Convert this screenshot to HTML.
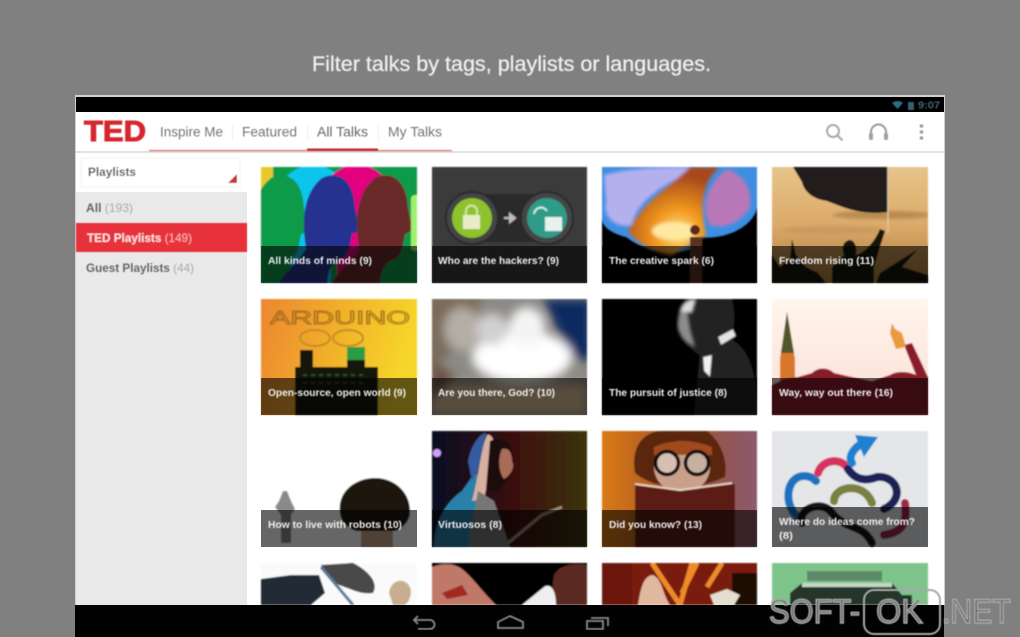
<!DOCTYPE html>
<html><head><meta charset="utf-8"><title>TED</title>
<style>html,body{margin:0;padding:0;background:#808080;width:1020px;height:637px;overflow:hidden}svg{display:block}text{font-family:"Liberation Sans",sans-serif}</style></head>
<body>
<svg width="1020" height="637" viewBox="0 0 1020 637" xmlns="http://www.w3.org/2000/svg">
<defs>
<filter id="b" x="-5%" y="-5%" width="110%" height="110%"><feGaussianBlur stdDeviation="0.55"/></filter>
<filter id="a" x="-3%" y="-3%" width="106%" height="106%"><feGaussianBlur stdDeviation="0.9"/></filter>
<filter id="b2" x="-10%" y="-10%" width="120%" height="120%"><feGaussianBlur stdDeviation="1.600"/></filter>
<filter id="b4" x="-40%" y="-40%" width="180%" height="180%"><feGaussianBlur stdDeviation="5"/></filter>
<linearGradient id="ard" x1="0" y1="0" x2="1" y2="0.2"><stop offset="0" stop-color="#ec8630"/><stop offset=".6" stop-color="#f2b72a"/><stop offset="1" stop-color="#f6d62c"/></linearGradient>
<linearGradient id="sand" x1="0" y1="0" x2="0" y2="1"><stop offset="0" stop-color="#e6c48a"/><stop offset=".5" stop-color="#dca968"/><stop offset="1" stop-color="#a87a3a"/></linearGradient>
<linearGradient id="pink" x1="0" y1="0" x2="0" y2="1"><stop offset="0" stop-color="#fff6ea"/><stop offset="1" stop-color="#fbdcd8"/></linearGradient>
<linearGradient id="virt" x1="0" y1="0" x2="1" y2="0"><stop offset="0" stop-color="#0a0a24"/><stop offset=".55" stop-color="#3c100c"/><stop offset="1" stop-color="#3a3406"/></linearGradient>
<linearGradient id="book" x1="0" y1="0" x2="1" y2="0"><stop offset="0" stop-color="#d97a14"/><stop offset=".5" stop-color="#a0502c"/><stop offset="1" stop-color="#8a5a70"/></linearGradient>
<radialGradient id="fire" cx=".55" cy=".75" r=".65"><stop offset="0" stop-color="#ffe88a"/><stop offset=".4" stop-color="#f29a20"/><stop offset="1" stop-color="#a84a1a"/></radialGradient>
<path id="head" d="M-57 116C-50 100-35 90-26 75C-30 50-30 20-10 4C5-3 18 4 22 25C23 35 24 40 27 52Q28 58 20 60C18 70 18 80 10 85C0 88-5 95-5 116Z"/>
</defs>
<rect width="1020" height="637" fill="#808080"/>
<text x="312" y="71" font-size="21" fill="#f0f0f0" stroke="#f0f0f0" stroke-width=".25" textLength="399" lengthAdjust="spacingAndGlyphs" filter="url(#b)">Filter talks by tags, playlists or languages.</text>

<!-- device -->
<rect x="75" y="95" width="870" height="510" fill="#d0d0d0"/>
<rect x="76" y="97" width="868" height="15" fill="#000"/>
<rect x="76" y="112" width="868" height="525" fill="#fff"/>
<rect x="76" y="151" width="868" height="2" fill="#e2e2e2"/>

<g filter="url(#b)">
<path d="M892 103q6-4 11 0l-5.500 6z" fill="#2a6f80"/>
<rect x="908" y="102" width="6" height="8" fill="#3a5d70"/>
<text x="918" y="108.500" font-size="10" font-weight="bold" fill="#4a6570" textLength="22" lengthAdjust="spacingAndGlyphs">9:07</text>
<text x="84" y="141" font-size="29" font-weight="bold" fill="#d6282e" stroke="#d6282e" stroke-width="1" textLength="62" lengthAdjust="spacingAndGlyphs">TED</text>
<g font-size="13.500" fill="#757575">
<text x="160" y="136.500" textLength="63" lengthAdjust="spacingAndGlyphs">Inspire Me</text>
<text x="242" y="136.500" textLength="55" lengthAdjust="spacingAndGlyphs">Featured</text>
<text x="317" y="136.500" textLength="51" lengthAdjust="spacingAndGlyphs" fill="#666">All Talks</text>
<text x="388" y="136.500" textLength="54" lengthAdjust="spacingAndGlyphs">My Talks</text>
</g>
<rect x="149" y="150" width="303" height="1.200" fill="#d96a6a"/>
<rect x="307" y="148.500" width="71" height="2.500" fill="#bb2a30"/>
<path d="M232.500 125v16M307.500 125v16M378.500 125v16" stroke="#eee"/>
<circle cx="833" cy="131" r="6" fill="none" stroke="#aaa" stroke-width="2"/>
<path d="M837.500 135.500l5 5" stroke="#aaa" stroke-width="2.200"/>
<path d="M871 135v-3a7.500 7.500 0 0 1 15 0v3" fill="none" stroke="#999" stroke-width="2"/>
<rect x="869" y="133" width="4" height="7" rx="1.500" fill="#a0a0a0"/><rect x="884" y="133" width="4" height="7" rx="1.500" fill="#a0a0a0"/>
<circle cx="921.500" cy="126" r="1.800" fill="#999"/><circle cx="921.500" cy="132" r="1.800" fill="#999"/><circle cx="921.500" cy="138" r="1.800" fill="#999"/>
</g>

<!-- sidebar -->
<rect x="76" y="192" width="171" height="413" fill="#e9e9e9"/>
<g filter="url(#b)">
<rect x="81" y="158" width="159" height="29" fill="#fff" stroke="#f2f2f2"/>
<path d="M237 174v9h-9z" fill="#c8303a"/>
<text x="88" y="176" font-size="12" font-weight="bold" fill="#555" textLength="48" lengthAdjust="spacingAndGlyphs">Playlists</text>
<text x="86" y="212" font-size="12" textLength="47" lengthAdjust="spacingAndGlyphs" fill="#aaa"><tspan font-weight="bold" fill="#666">All</tspan> (193)</text>
<rect x="76" y="223" width="171" height="29" fill="#e8303a"/>
<text x="87" y="242" font-size="12" textLength="105" lengthAdjust="spacingAndGlyphs" fill="#f5b5b5"><tspan font-weight="bold" fill="#fbe4e4">TED Playlists</tspan> (149)</text>
<text x="86" y="272" font-size="12" textLength="108" lengthAdjust="spacingAndGlyphs" fill="#aaa"><tspan font-weight="bold" fill="#666">Guest Playlists</tspan> (44)</text>
</g>

<!-- row 1 -->
<g filter="url(#a)">
<svg x="261" y="167" width="156" height="116" viewBox="0 0 156 116">
<rect width="156" height="116" fill="#0f9a4a"/>
<rect width="12" height="30" fill="#e8c82a"/><rect y="80" width="10" height="36" fill="#e8c82a"/>
<circle cx="52" cy="34" r="36" fill="#0cc4ec"/><rect x="30" y="40" width="40" height="76" fill="#0cc4ec"/>
<circle cx="96" cy="34" r="36" fill="#e2047e"/><rect x="76" y="40" width="38" height="76" fill="#e2047e"/>
<use href="#head" x="20" y="7" fill="#0f9a4a"/>
<use href="#head" x="71" y="7" fill="#26308f"/>
<use href="#head" x="124" y="7" fill="#6b2c2a"/>
<rect x="150" y="28" width="8" height="56" rx="4" fill="#a0f070"/>
</svg>
<svg x="432" y="167" width="155" height="116" viewBox="0 0 155 116">
<rect width="155" height="116" fill="#3a3a3a"/>
<rect x="38" y="27" width="80" height="48" fill="#2c2c2c"/>
<circle cx="40" cy="51" r="26" fill="#444" stroke="#2a2a2a" stroke-width="2"/>
<circle cx="115" cy="51" r="26" fill="#444" stroke="#2a2a2a" stroke-width="2"/>
<circle cx="40" cy="51" r="20" fill="#8ec32e"/>
<circle cx="115" cy="51" r="20" fill="#2f9c88"/>
<rect x="31" y="48" width="17" height="14" fill="#e8edc8"/>
<path d="M34 48v-4a5.500 5.500 0 0 1 11 0v4" fill="none" stroke="#d6e6a0" stroke-width="2"/>
<rect x="113" y="50" width="17" height="14" fill="#e6f2ee"/>
<path d="M102 47a7 7 0 0 1 13-3" fill="none" stroke="#d0eee6" stroke-width="2"/>
<path d="M72 51h10M78 47l5 4-5 4z" stroke="#bbb" stroke-width="2" fill="#bbb"/>
</svg>
<svg x="602" y="167" width="155" height="116" viewBox="0 0 155 116">
<rect width="155" height="116" fill="#040404"/>
<path d="M0 0H155V40C150 62 120 72 100 70C95 90 50 90 25 70C10 66 0 60 0 50Z" fill="#3d8ee2"/>
<g filter="url(#b2)">
<path d="M2 8C30 0 70 0 95 0 70 15 35 30 30 58 15 62 0 50 4 35Z" fill="#b4b0ee"/>
<path d="M88 0H118C100 14 98 40 104 68L70 88C50 85 35 76 26 64 40 35 70 18 88 0Z" fill="url(#fire)"/>
<path d="M125 2C142 8 150 22 148 40 138 58 118 62 108 58 98 40 106 16 125 2Z" fill="#b878b8"/>
<ellipse cx="72" cy="64" rx="22" ry="9" fill="#ffe9a0"/>
</g>
<circle cx="93" cy="63" r="5" fill="#5a2a12"/>
<rect x="88" y="70" width="12" height="46" fill="#5a3020"/>
</svg>
<svg x="772" y="167" width="156" height="116" viewBox="0 0 156 116">
<rect width="156" height="116" fill="url(#sand)"/>
<g filter="url(#b2)"><ellipse cx="110" cy="48" rx="50" ry="4" fill="#b88a50"/><ellipse cx="60" cy="63" rx="50" ry="4" fill="#c89a60"/></g>
<path d="M21 0H116V45C90 48 75 42 55 34C40 32 32 24 30 15Z" fill="#201d1a"/>
<path d="M116 0v66" stroke="#d8c8a0" stroke-width="1.500"/>
<path d="M0 116V88L8 100 18 92 20 72 24 88 34 100 46 106 54 116ZM60 116V100L72 88C68 78 74 73 78 73 84 74 85 82 84 88 92 86 102 76 108 62L113 64 108 80 102 100 102 116ZM104 116L108 106 146 82 130 100 156 108V116Z" fill="#141210"/>
</svg>
<!-- row 2 -->
<svg x="261" y="299" width="156" height="116" viewBox="0 0 156 116">
<rect width="156" height="116" fill="url(#ard)"/>
<text x="9" y="25" font-size="18" fill="none" stroke="#9a6418" stroke-width=".9" textLength="140" lengthAdjust="spacingAndGlyphs">ARDUINO</text>
<ellipse cx="54" cy="39" rx="15" ry="8" fill="none" stroke="#c48c20" stroke-width="2"/><ellipse cx="87" cy="39" rx="15" ry="8" fill="none" stroke="#c48c20" stroke-width="2"/>
<path d="M34 116V68H39V51H52V68H86V50H104V68H117V116Z" fill="#14160c"/>
<rect x="86" y="48" width="18" height="13" fill="#2c9c44"/>
<path d="M42 76h60M42 84h60" stroke="#2c5a30" stroke-width="1.500" stroke-dasharray="4 4"/>
</svg>
<svg x="432" y="299" width="155" height="116" viewBox="0 0 155 116">
<rect width="155" height="116" fill="#8c8a86"/>
<g filter="url(#b4)">
<path d="M110 0H160V60H135C130 40 120 20 110 0Z" fill="#0e2a60"/>
<path d="M-5-5H50L40 40-5 70Z" fill="#7a6a5a"/>
<ellipse cx="30" cy="30" rx="18" ry="22" fill="#b4aea4"/>
<ellipse cx="90" cy="58" rx="50" ry="26" fill="#fff"/>
<ellipse cx="95" cy="28" rx="18" ry="20" fill="#f4f4f4"/>
<ellipse cx="60" cy="30" rx="16" ry="16" fill="#d0d0d0"/>
<path d="M0 85H155V116H0Z" fill="#dcc09a"/>
<path d="M0 60L25 80 0 100Z" fill="#6a5040"/>
</g>
</svg>
<svg x="602" y="299" width="155" height="116" viewBox="0 0 155 116">
<rect width="155" height="116" fill="#040404"/>
<path d="M84 0H130C134 20 132 30 128 40 150 50 155 80 155 116H92L98 56C88 50 78 40 76 28 76 12 80 8 84 0Z" fill="#222"/>
<g filter="url(#b2)">
<path d="M76 28C76 14 80 6 84 4L88 30 93 48C84 44 78 38 76 28Z" fill="#8c8c8c"/>
<path d="M78 12C80 4 86 0 94 0L90 14Z" fill="#dcdcdc"/>
</g>
<path d="M116 38l15-8 3 7-15 9z" fill="#e4e4e4" filter="url(#b)"/><path d="M101 58l9-2-2 22-6-6z" fill="#f0f0f0" filter="url(#b)"/>
</svg>
<svg x="772" y="299" width="156" height="116" viewBox="0 0 156 116">
<rect width="156" height="116" fill="url(#pink)"/>
<path d="M8 116V60L15 13 23 60V116Z" fill="#d8762a"/><path d="M9 54L15 13 22 54Z" fill="#50562a"/>
<path d="M0 116V86L12 80 26 78 40 74C46 68 56 68 62 74L80 78 100 82 118 76C124 72 136 72 144 76L132 46 140 44 156 78V116Z" fill="#8a1e2c"/>
<path d="M118 34L120 24 123 30 130 34 134 48 124 50Z" fill="#ec9a40"/>
</svg>
<!-- row 3 -->
<svg x="261" y="431" width="156" height="116" viewBox="0 0 156 116">
<rect width="156" height="116" fill="#fff"/>
<path d="M100 95H132V116H100Z" fill="#c8a48a"/>
<path d="M79 82C76 60 95 47 114 47 134 47 150 62 149 82 148 92 140 98 134 100H96C88 98 80 92 79 82Z" fill="#1a1410"/>
<path d="M20 112V84L14 76 18 70 22 60 26 60 30 70 34 78 30 84 30 112Z" fill="#8a8a8a"/>
</svg>
<svg x="432" y="431" width="155" height="116" viewBox="0 0 155 116">
<rect width="155" height="116" fill="url(#virt)"/>
<circle cx="5" cy="22" r="4" fill="#d0a0ff"/>
<path d="M2 116C2 90 15 70 30 60L44 40 52 62 40 116Z" fill="#2a80a8"/>
<path d="M40 70C48 40 48 20 55 4 58 2 63 8 62 16L58 40 52 68Z" fill="#d8b0a0"/>
<path d="M36 30C40 10 50 2 54 2L46 40 40 50Z" fill="#345ca0"/>
<path d="M58 10C70 4 82 12 80 28 84 36 78 44 74 50L66 62 54 58Z" fill="#1c0e0c"/>
<path d="M70 18C78 16 80 24 80 30 84 38 76 46 72 48 66 40 66 26 70 18Z" fill="#a86c58"/>
<path d="M46 60L62 70 78 116H36Z" fill="#777"/>
<path d="M76 112L110 84 130 76" stroke="#9a8a70" stroke-width="3" fill="none"/>
</svg>
<svg x="602" y="431" width="155" height="116" viewBox="0 0 155 116">
<rect width="155" height="116" fill="url(#book)"/>
<path d="M33 42C28 12 45 0 60 0H105C118 10 126 28 123 46 110 52 95 56 78 56 62 56 45 52 33 42Z" fill="#5a2810"/>
<ellipse cx="80" cy="36" rx="28" ry="26" fill="#caa08c"/>
<path d="M52 16Q80 4 110 16L110 24H52Z" fill="#a0481a"/>
<circle cx="65" cy="32" r="11.500" fill="#d8c0b0" stroke="#111" stroke-width="3.500"/><circle cx="95" cy="32" r="11.500" fill="#c8b0a0" stroke="#111" stroke-width="3.500"/>
<path d="M33 54L78 60 133 53V116H33Z" fill="#5c1e14"/>
<path d="M33 53L78 59 130 52" stroke="#e8d8c8" stroke-width="1.800" fill="none"/>
</svg>
<svg x="772" y="431" width="156" height="116" viewBox="0 0 156 116">
<rect width="156" height="116" fill="#e4e6e8"/>
<g fill="none" stroke-width="8" stroke-linecap="round">
<path d="M28 88C10 75 14 45 32 45 38 45 41 47 44 50" stroke="#1a72c0"/>
<path d="M46 42C50 28 70 26 76 38" stroke="#d83060"/>
<path d="M76 38C84 50 95 50 105 46 125 44 134 68 112 78" stroke="#1a2058"/>
<path d="M62 70C62 55 92 50 100 72" stroke="#7a8040"/>
<path d="M30 92C25 78 50 68 60 82 75 100 90 92 100 112" stroke="#141414"/>
<path d="M80 32C75 24 85 14 92 12" stroke="#1a82d0"/>
<path d="M112 104C128 102 136 95 133 72" stroke="#a02848"/>
</g>
<path d="M83 4L106 6 92 26Z" fill="#1a82d0"/>
</svg>
<!-- row 4 -->
<svg x="261" y="563" width="156" height="42" viewBox="0 0 156 42">
<rect width="156" height="42" fill="#fafafa"/>
<path d="M0 16L30 12 58 12 64 30 50 42H0Z" fill="#242c34"/>
<path d="M60 2L92 0C108 8 118 20 112 30 100 32 90 26 78 22 70 18 64 12 60 2Z" fill="#4a4a4a"/>
<path d="M60 4L92 42" stroke="#5a7a9a" stroke-width="3"/>
<path d="M128 30C130 14 148 14 150 28 150 36 146 42 142 42H132Z" fill="#c8ae90"/>
</svg>
<svg x="432" y="563" width="155" height="42" viewBox="0 0 155 42">
<rect width="155" height="42" fill="#040404"/>
<path d="M0 4C10 0 22 0 30 6 42 16 48 26 64 42H0Z" fill="#c07868"/>
<path d="M10 30L30 22 36 32 15 36Z" fill="#a02a24"/>
<path d="M122 12C128 2 140 0 155 2V42H118Z" fill="#5a2a24"/>
<path d="M90 42L112 24C118 20 124 26 124 42Z" fill="#eee"/>
</svg>
<svg x="602" y="563" width="155" height="42" viewBox="0 0 155 42">
<rect width="155" height="42" fill="#7a1a0a"/>
<path d="M50 0L78 42 90 0M95 0L80 30M120 0L105 24" stroke="#ee8a2a" stroke-width="5" fill="none"/>
<rect x="130" y="10" width="25" height="32" fill="#1a0a06"/>
<path d="M36 42C38 30 40 14 50 12 60 14 60 30 68 42Z" fill="#e0b8a0"/>
<path d="M108 32L125 26 138 32 132 42H112Z" fill="#e4ddd0"/>
<rect width="30" height="42" fill="#6a1208"/>
</svg>
<svg x="772" y="563" width="156" height="42" viewBox="0 0 156 42">
<rect width="156" height="42" fill="#7ec48a"/>
<path d="M30 20H120L130 32H140V42H18V30Z" fill="#26342a"/>
<rect x="35" y="8" width="75" height="10" fill="#5c8a68"/>
<rect x="30" y="20" width="90" height="4" fill="#c4d8c4"/>
</svg>
</g>

<!-- captions -->
<g fill="#000" fill-opacity=".6">
<rect x="261" y="246" width="156" height="37"/><rect x="432" y="246" width="155" height="37"/><rect x="602" y="246" width="155" height="37"/><rect x="772" y="246" width="156" height="37"/>
<rect x="261" y="378" width="156" height="37"/><rect x="432" y="378" width="155" height="37"/><rect x="602" y="378" width="155" height="37"/><rect x="772" y="378" width="156" height="37"/>
<rect x="261" y="510" width="156" height="37"/><rect x="432" y="510" width="155" height="37"/><rect x="602" y="510" width="155" height="37"/><rect x="772" y="507" width="156" height="40"/>
</g>
<g font-size="10.500" font-weight="bold" fill="#eee" filter="url(#b)">
<text x="268" y="264" textLength="104" lengthAdjust="spacingAndGlyphs">All kinds of minds (9)</text>
<text x="438" y="264" textLength="121" lengthAdjust="spacingAndGlyphs">Who are the hackers? (9)</text>
<text x="609" y="264" textLength="105" lengthAdjust="spacingAndGlyphs">The creative spark (6)</text>
<text x="779" y="264" textLength="95" lengthAdjust="spacingAndGlyphs">Freedom rising (11)</text>
<text x="268" y="396" textLength="138" lengthAdjust="spacingAndGlyphs">Open-source, open world (9)</text>
<text x="438" y="396" textLength="117" lengthAdjust="spacingAndGlyphs">Are you there, God? (10)</text>
<text x="609" y="396" textLength="118" lengthAdjust="spacingAndGlyphs">The pursuit of justice (8)</text>
<text x="779" y="396" textLength="114" lengthAdjust="spacingAndGlyphs">Way, way out there (16)</text>
<text x="268" y="528" textLength="134" lengthAdjust="spacingAndGlyphs">How to live with robots (10)</text>
<text x="438" y="528" textLength="64" lengthAdjust="spacingAndGlyphs">Virtuosos (8)</text>
<text x="609" y="528" textLength="93" lengthAdjust="spacingAndGlyphs">Did you know? (13)</text>
<text x="779" y="525" textLength="136" lengthAdjust="spacingAndGlyphs">Where do ideas come from?</text>
<text x="779" y="539" textLength="14" lengthAdjust="spacingAndGlyphs">(8)</text>
</g>

<!-- nav bar -->
<rect x="75" y="605" width="869" height="32" fill="#020202"/>
<g fill="none" stroke="#8a8a8a" stroke-width="1.800" filter="url(#b)">
<path d="M414 620h16a4.500 4.500 0 0 1 0 9h-12M418 616l-4 4 4 4"/>
<path d="M498 628v-6l12-6 13 6v6z"/>
<path d="M587 621h16v8h-16zM591 618h17v8"/>
</g>

<!-- watermark -->
<g filter="url(#b)">
<rect x="864" y="590" width="76" height="44" rx="10" fill="none" stroke="#a8a8a8" stroke-width="2"/>
<g font-size="34" fill="#666" stroke="#aaa" stroke-width="1.400">
<text x="769" y="623" textLength="91" lengthAdjust="spacingAndGlyphs">SOFT-</text>
<text x="876" y="623" textLength="47" lengthAdjust="spacingAndGlyphs">OK</text>
<text x="942" y="623" textLength="69" lengthAdjust="spacingAndGlyphs">.NET</text>
</g>
</g>
</svg>
</body></html>
